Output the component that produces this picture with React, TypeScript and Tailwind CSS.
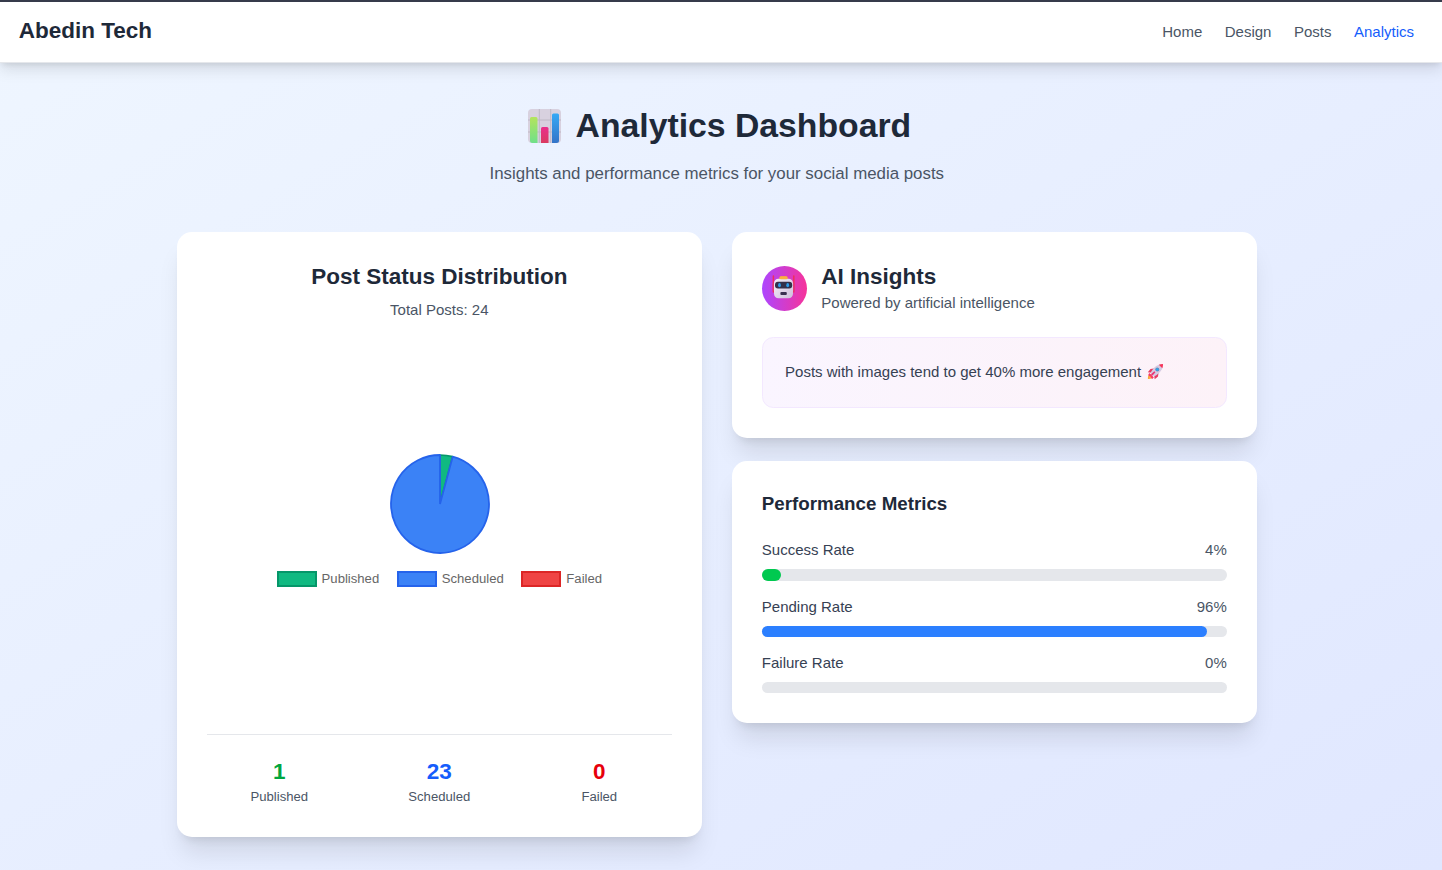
import React from "react";

const navLinks = [
  { label: "Home", active: false },
  { label: "Design", active: false },
  { label: "Posts", active: false },
  { label: "Analytics", active: true },
];

const stats = [
  { value: 1, label: "Published", color: "text-[#00a63e]" },
  { value: 23, label: "Scheduled", color: "text-[#155dfc]" },
  { value: 0, label: "Failed", color: "text-[#e7000b]" },
];

const metrics = [
  { label: "Success Rate", value: 4.17, color: "bg-[#00c950]" },
  { label: "Pending Rate", value: 95.83, color: "bg-[#2b7fff]" },
  { label: "Failure Rate", value: 0, color: "bg-[#fb2c36]" },
];

const legend = [
  { label: "Published", box: "bg-[#10b981] border-[#059669]" },
  { label: "Scheduled", box: "bg-[#3b82f6] border-[#2563eb]" },
  { label: "Failed", box: "bg-[#ef4444] border-[#dc2626]" },
];

function ChartIcon() {
  return (
    <svg className="ml-[1.5px] h-[36px] w-[36px]" viewBox="0 0 36 36" aria-hidden="true">
      <defs>
        <linearGradient id="barGreen" x1="0" y1="0" x2="0" y2="1">
          <stop offset="0" stopColor="#b4e45c" />
          <stop offset="1" stopColor="#6fe08a" />
        </linearGradient>
        <linearGradient id="barPink" x1="0" y1="0" x2="0" y2="1">
          <stop offset="0" stopColor="#ea2f8c" />
          <stop offset="1" stopColor="#d93a60" />
        </linearGradient>
        <linearGradient id="barBlue" x1="0" y1="0" x2="0" y2="1">
          <stop offset="0" stopColor="#35a9f5" />
          <stop offset="1" stopColor="#3474c8" />
        </linearGradient>
      </defs>
      <rect x="1" y="1" width="33" height="34" rx="4" fill="#d8d1df" />
      <path d="M12.3 1v34M23.7 1v34M1 12h33M1 24h33" stroke="#bfb8c5" strokeWidth="1" />
      <path d="M3 14V10.500a1.500 1.500 0 0 1 1.500-1.500H9a1.500 1.500 0 0 1 1.500 1.500V35H5.500a2.500 2.500 0 0 1-2.500-2.500z" fill="url(#barGreen)" />
      <path d="M14 35V20.500a1.500 1.500 0 0 1 1.500-1.500H20a1.500 1.500 0 0 1 1.500 1.500V35z" fill="url(#barPink)" />
      <path d="M25 35V7a1.500 1.500 0 0 1 1.500-1.500H30.500A1.500 1.500 0 0 1 32 7v25.500a2.500 2.500 0 0 1-2.500 2.500z" fill="url(#barBlue)" />
    </svg>
  );
}

function RobotIcon() {
  return (
    <svg className="mb-[3px] h-[24px] w-[24px]" viewBox="0 0 24 24" aria-hidden="true">
      <defs>
        <linearGradient id="robotFace" x1="0" y1="0" x2="1" y2="1">
          <stop offset="0" stopColor="#f5eff8" />
          <stop offset="1" stopColor="#cfc0dc" />
        </linearGradient>
      </defs>
      <path d="M1.400 1v16M21.800 1v16" stroke="#f0305a" strokeWidth="1.500" strokeLinecap="round" />
      <rect x="0.500" y="8" width="2.200" height="8" rx="1.100" fill="#e53878" />
      <rect x="20.500" y="8" width="2.200" height="8" rx="1.100" fill="#e53878" />
      <rect x="7.500" y="1.200" width="8" height="3.500" rx="1.500" fill="#f9a93b" />
      <rect x="2" y="3.700" width="19" height="19.500" rx="4.500" fill="url(#robotFace)" />
      <rect x="7.500" y="1.400" width="8" height="2.800" rx="1.300" fill="#fbb13f" />
      <rect x="3" y="6.800" width="17.200" height="6.800" rx="3" fill="#34304a" />
      <ellipse cx="7.500" cy="10.200" rx="1.400" ry="2.100" fill="#2d9bea" />
      <ellipse cx="15.700" cy="10.200" rx="1.400" ry="2.100" fill="#2d9bea" />
      <rect x="8.400" y="17" width="6.400" height="2.900" rx="1" fill="#3b3151" />
    </svg>
  );
}

function RocketIcon() {
  return (
    <svg className="mb-[1px] h-[17px] w-[17px]" viewBox="0 0 17 17" aria-hidden="true">
      <path d="M7 5.500 3.500 6 .8 9.300l4 .5zM11.500 10 11 13.500l-3.300 2.800-.6-4z" fill="#e43b62" />
      <path d="M3.200 11c-2 .6-2.400 2.700-2.300 5 2.200.1 4.600-.2 5-2.400z" fill="#f8a13c" />
      <path d="M2.300 10 6.800 14.500 5.200 15.900 1.200 12z" fill="#f5376c" />
      <path d="M2.600 12.800 4.300 14.600 1.500 15.700z" fill="#ffb03d" />
      <path d="M16 1C11 1 7 3.500 3.500 10l3.500 3.500C13.500 10 16 6 16 1z" fill="#d5cbe2" />
      <path d="M16 1c-1.500 0-2.900.2-4.200.7l3.500 3.500c.5-1.300.7-2.700.7-4.200z" fill="#f93358" />
      <path d="M3.900 11.200 7.400 8.300l1 1-3 3.400z" fill="#e93572" />
      <circle cx="10.300" cy="6.600" r="2" fill="#6f8ab1" />
      <circle cx="10.300" cy="6.600" r="1.400" fill="#2aa5ee" />
    </svg>
  );
}

function PieChart() {
  const angle = (2 * Math.PI) / 24;
  const r = 49;
  const x = 50 + r * Math.sin(angle);
  const y = 50 - r * Math.cos(angle);
  return (
    <svg className="ml-[1px] h-[100px] w-[100px]" viewBox="0 0 100 100" role="img">
      <path
        d={`M50 50V1A${r} ${r} 0 0 1 ${x} ${y}Z`}
        fill="#10b981"
        stroke="#059669"
        strokeWidth="1.700"
        strokeLinejoin="bevel"
      />
      <path
        d={`M50 50L${x} ${y}A${r} ${r} 0 1 1 50 1Z`}
        fill="#3b82f6"
        stroke="#2563eb"
        strokeWidth="1.800"
        strokeLinejoin="bevel"
      />
    </svg>
  );
}

export default function App() {
  return (
    <div className="flex h-[870px] flex-col overflow-hidden bg-linear-to-br/srgb from-[#eff6ff] to-[#e0e7ff] font-['Liberation_Sans',Arial,sans-serif] text-[15px] leading-[22.5px]">
      <header className="flex h-[63px] shrink-0 items-center justify-between border-t-2 border-b border-t-[#363b4b] border-b-[#e5e7eb] bg-white pr-[28px] pl-[18.75px] shadow-[0_7px_14px_0_rgb(0_0_0/0.1),0_3px_6px_-2px_rgb(0_0_0/0.1)]">
        <div className="pb-[2px] text-[22.5px] leading-[30px] font-bold text-[#1e2939]">Abedin Tech</div>
        <nav className="flex gap-[22.5px]">
          {navLinks.map((link) => (
            <a key={link.label} className={link.active ? "text-[#155dfc]" : "text-[#4a5565]"}>
              {link.label}
            </a>
          ))}
        </nav>
      </header>

      <main className="ml-[176.800px] w-[1080px] pt-[44px]">
        <div className="mb-[45px] text-center">
          <h1 className="mb-[16px] flex h-[37.5px] items-center justify-center text-[33.75px] leading-[37.5px] font-bold text-[#1e2939]">
            <span className="mr-[9.6px] flex w-[43.6px] justify-center">
              <ChartIcon />
            </span>
            Analytics Dashboard
          </h1>
          <p className="text-[16.875px] leading-[26.25px] text-[#4a5565]">
            Insights and performance metrics for your social media posts
          </p>
        </div>

        <div className="grid grid-cols-2 items-start gap-[30px]">
          <section className="flex h-[605.25px] flex-col rounded-[15px] bg-white p-[30px] shadow-xl">
            <div className="text-center">
              <h2 className="mb-[7px] text-[22.5px] leading-[30px] font-bold text-[#1e2939]">
                Post Status Distribution
              </h2>
              <p className="text-[#4a5565]">Total Posts: 24</p>
            </div>
            <div className="flex flex-1 flex-col items-center justify-center pb-[14px]">
              <PieChart />
              <div className="mt-[17px] flex gap-[17.5px]">
                {legend.map((item) => (
                  <div key={item.label} className="flex items-center gap-[5.1px]">
                    <span className={`h-[16px] w-[40px] border-2 ${item.box}`} />
                    <span className="pb-[1px] text-[13.125px] leading-[15px] text-[#666666]">{item.label}</span>
                  </div>
                ))}
              </div>
            </div>
            <div className="grid grid-cols-3 gap-[15px] border-t border-[#e5e7eb] pt-[21.5px] text-center">
              {stats.map((stat) => (
                <div key={stat.label}>
                  <div className={`mb-[1.5px] text-[22.5px] leading-[30px] font-bold ${stat.color}`}>{stat.value}</div>
                  <div className="text-[13.125px] leading-[18.75px] text-[#4a5565]">{stat.label}</div>
                </div>
              ))}
            </div>
          </section>

          <div className="flex flex-col gap-[23px]">
            <section className="rounded-[15px] bg-white p-[30px] shadow-xl">
              <div className="mb-[22.75px] flex items-center">
                <div className="mr-[14.5px] flex size-[45px] items-center justify-center rounded-full bg-linear-to-r/srgb from-[#ad46ff] to-[#f6339a]">
                  <RobotIcon />
                </div>
                <div>
                  <h2 className="text-[22.5px] leading-[30px] font-bold text-[#1e2939]">AI Insights</h2>
                  <p className="text-[#4a5565]">Powered by artificial intelligence</p>
                </div>
              </div>
              <div className="flex items-center rounded-[11.25px] border border-[#f3e8ff] bg-gradient-to-r from-[#faf5ff] to-[#fdf2f8] px-[22.3px] py-[22.25px] leading-[24.375px] text-[#364153]">
                Posts with images tend to get 40% more engagement
                <span className="ml-[5.5px]">
                  <RocketIcon />
                </span>
              </div>
            </section>

            <section className="rounded-[15px] bg-white px-[30px] pt-[30px] pb-[29.5px] shadow-xl">
              <h3 className="mb-[22.25px] text-[18.75px] leading-[26.25px] font-bold text-[#1e2939]">
                Performance Metrics
              </h3>
              <div className="flex flex-col gap-[15px]">
                {metrics.map((metric) => (
                  <div key={metric.label}>
                    <div className="mb-[7.5px] flex justify-between">
                      <span className="text-[#364153]">{metric.label}</span>
                      <span className="text-[#4a5565]">{Math.round(metric.value)}%</span>
                    </div>
                    <div className="h-[11.25px] rounded-full bg-[#e5e7eb]">
                      <div
                        className={`h-full rounded-full ${metric.color}`}
                        style={{ width: `${metric.value}%` }}
                      />
                    </div>
                  </div>
                ))}
              </div>
            </section>
          </div>
        </div>
      </main>
    </div>
  );
}
